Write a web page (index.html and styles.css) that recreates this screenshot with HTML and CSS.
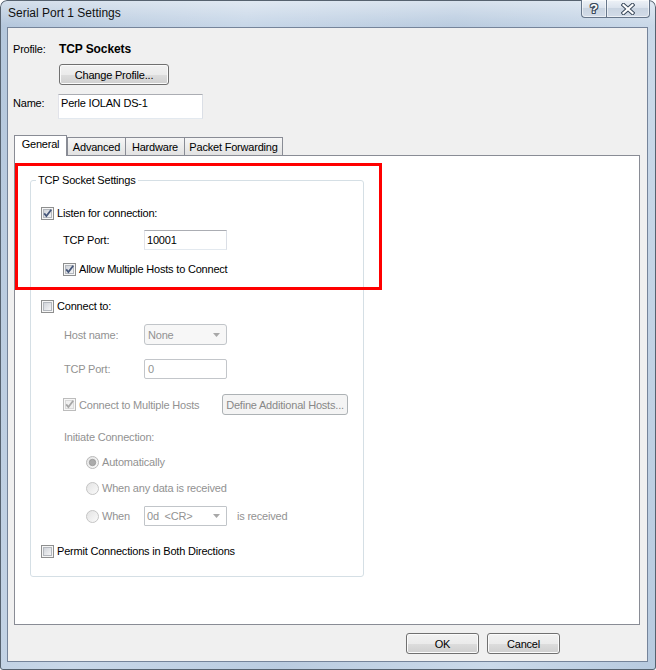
FILE: index.html
```html
<!DOCTYPE html>
<html>
<head>
<meta charset="utf-8">
<title>Serial Port 1 Settings</title>
<link rel="stylesheet" href="styles.css">
</head>
<body>
<div class="window">
  <div class="titlebar">
    <span class="title">Serial Port 1 Settings</span>
    <div class="caption-btns">
      <div class="cap help"><span class="help-glyph">?</span></div>
      <div class="cap close">
        <svg width="14" height="12" viewBox="0 0 14 12"><path d="M2.5 2 L11.5 10 M11.5 2 L2.5 10" stroke="#3b4a5c" stroke-width="4.2" stroke-linecap="square" fill="none"/><path d="M2.5 2 L11.5 10 M11.5 2 L2.5 10" stroke="#fff" stroke-width="2.2" stroke-linecap="square" fill="none"/></svg>
      </div>
    </div>
  </div>
  <div class="client">
    <div class="profile-row"><span class="profile-lbl">Profile:</span><span class="profile-name">TCP Sockets</span></div>
    <button class="btn change-btn">Change Profile...</button>
    <div class="name-row"><span class="name-lbl">Name:</span><div class="input name-box">Perle IOLAN DS-1</div></div>
    <div class="tabs">
      <div class="tab active tab-general">General</div>
      <div class="tab tab-advanced">Advanced</div>
      <div class="tab tab-hardware">Hardware</div>
      <div class="tab tab-packet">Packet Forwarding</div>
    </div>
    <div class="panel">
      <div class="highlight"></div>
      <fieldset class="group">
        <legend>TCP Socket Settings</legend>
        <div class="row row-check gap-first">
          <svg class="cb" viewBox="0 0 13 13"><rect x="0.5" y="0.5" width="12" height="12" fill="#f6f6f6" stroke="#8e8f8f"/><rect x="2.5" y="2.5" width="8" height="8" fill="url(#cbfill)" stroke="#b4b8be"/><path d="M3.2 6.4 L5.4 9 L10.2 2.8" fill="none" stroke="#46577a" stroke-width="1.8"/></svg>
          <span class="cb-label">Listen for connection:</span>
        </div>
        <div class="row row-field indent gap-10">
          <span class="field-label">TCP Port:</span>
          <div class="input">10001</div>
        </div>
        <div class="row row-check indent gap-12">
          <svg class="cb" viewBox="0 0 13 13"><rect x="0.5" y="0.5" width="12" height="12" fill="#f6f6f6" stroke="#8e8f8f"/><rect x="2.5" y="2.5" width="8" height="8" fill="url(#cbfill)" stroke="#b4b8be"/><path d="M3.2 6.4 L5.4 9 L10.2 2.8" fill="none" stroke="#46577a" stroke-width="1.8"/></svg>
          <span class="cb-label">Allow Multiple Hosts to Connect</span>
        </div>
        <div class="row row-check gap-23">
          <svg class="cb" viewBox="0 0 13 13"><rect x="0.5" y="0.5" width="12" height="12" fill="#f6f6f6" stroke="#8e8f8f"/><rect x="2.5" y="2.5" width="8" height="8" fill="url(#cbfill)" stroke="#b4b8be"/></svg>
          <span class="cb-label">Connect to:</span>
        </div>
        <div class="row row-tall indent-lbl gap-11 disabled">
          <span class="field-label narrow">Host name:</span>
          <div class="combo rounded"><span>None</span><svg width="7" height="4" viewBox="0 0 7 4"><path d="M0 0h7L3.5 4z" fill="#a8a8a8"/></svg></div>
        </div>
        <div class="row row-field indent-lbl gap-14 disabled">
          <span class="field-label narrow">TCP Port:</span>
          <div class="input input-disabled">0</div>
        </div>
        <div class="row row-tall indent gap-15 disabled">
          <svg class="cb" viewBox="0 0 13 13"><rect x="0.5" y="0.5" width="12" height="12" fill="#f7f7f7" stroke="#bcbcbc"/><rect x="2.5" y="2.5" width="8" height="8" fill="#f0f0f0" stroke="#d9d9d9"/><path d="M3.2 6.4 L5.4 9 L10.2 2.8" fill="none" stroke="#a6a6a6" stroke-width="1.8"/></svg>
          <span class="cb-label">Connect to Multiple Hosts</span>
          <button class="btn btn-disabled define-btn">Define Additional Hosts...</button>
        </div>
        <div class="row row-check indent-lbl gap-15 disabled">
          <span>Initiate Connection:</span>
        </div>
        <div class="row row-check indent-radio gap-11 disabled">
          <svg class="rb" viewBox="0 0 13 13"><circle cx="6.5" cy="6.5" r="6" fill="url(#rbfill)" stroke="#b9b9b9"/><circle cx="6.5" cy="6.5" r="3.2" fill="#ababab" stroke="#969696" stroke-width="0.8"/></svg>
          <span class="cb-label">Automatically</span>
        </div>
        <div class="row row-check indent-radio gap-12 disabled">
          <svg class="rb" viewBox="0 0 13 13"><circle cx="6.5" cy="6.5" r="6" fill="url(#rbfill)" stroke="#c4c4c4"/></svg>
          <span class="cb-label">When any data is received</span>
        </div>
        <div class="row row-field indent-radio gap-11 disabled">
          <svg class="rb" viewBox="0 0 13 13"><circle cx="6.5" cy="6.5" r="6" fill="url(#rbfill)" stroke="#c4c4c4"/></svg>
          <span class="cb-label when-label">When</span>
          <div class="combo char-combo"><span class="pre">0d  &lt;CR&gt;</span><svg width="7" height="4" viewBox="0 0 7 4"><path d="M0 0h7L3.5 4z" fill="#a8a8a8"/></svg></div>
          <span class="received">is received</span>
        </div>
        <div class="row row-check gap-18">
          <svg class="cb" viewBox="0 0 13 13"><rect x="0.5" y="0.5" width="12" height="12" fill="#f6f6f6" stroke="#8e8f8f"/><rect x="2.5" y="2.5" width="8" height="8" fill="url(#cbfill)" stroke="#b4b8be"/></svg>
          <span class="cb-label">Permit Connections in Both Directions</span>
        </div>
      </fieldset>
    </div>
    <div class="dialog-btns">
      <button class="btn dlg-btn">OK</button>
      <button class="btn dlg-btn">Cancel</button>
    </div>
  </div>
</div>
<svg class="defs" width="0" height="0">
  <defs>
    <linearGradient id="cbfill" x1="0" y1="0" x2="1" y2="1">
      <stop offset="0" stop-color="#cdd1d7"/>
      <stop offset="1" stop-color="#f7f7f8"/>
    </linearGradient>
    <linearGradient id="rbfill" x1="0" y1="0" x2="1" y2="1">
      <stop offset="0" stop-color="#e2e2e2"/>
      <stop offset="1" stop-color="#fbfbfb"/>
    </linearGradient>
  </defs>
</svg>
</body>
</html>
```
FILE: styles.css
```css
body {
  margin: 0;
  background: #fff;
  font-family: "Liberation Sans", Arial, sans-serif;
  font-size: 11px;
  letter-spacing: -0.2px;
  color: #000;
}

.defs {
  display: block;
  width: 0;
  height: 0;
  overflow: hidden;
}

.window {
  width: 656px;
  height: 670px;
  box-sizing: border-box;
  padding: 0 8px 8px 7px;
  display: flex;
  flex-direction: column;
  border-radius: 7px 7px 3px 3px;
  overflow: hidden;
  background:
    linear-gradient(180deg, rgba(255,255,255,0.45) 0, rgba(255,255,255,0) 26px),
    linear-gradient(105deg, #b4c7dc 0%, #c8d7e8 30%, #bacce0 55%, #cad9e9 80%, #b7cadf 100%);
  box-shadow: inset 0 0 0 1px #56626f;
}

.titlebar {
  height: 27px;
  flex: none;
  display: flex;
  align-items: flex-start;
}

.title {
  margin: 6px 0 0 1px;
  font-size: 12px;
  line-height: 14px;
  letter-spacing: 0;
  color: #111;
}

.caption-btns {
  margin-left: auto;
  margin-right: -2px;
  display: flex;
}

.cap {
  height: 18px;
  box-sizing: border-box;
  border: 1px solid #66768a;
  border-top: none;
  background: linear-gradient(180deg, #eef2f7 0%, #dbe3ed 45%, #c9d4e1 50%, #d3dce8 100%);
  box-shadow: inset 0 0 0 1px rgba(255,255,255,0.55);
  display: flex;
  align-items: center;
  justify-content: center;
}

.help {
  width: 25px;
  border-right: none;
  border-radius: 0 0 0 4px;
}

.close {
  width: 44px;
  border-radius: 0 0 4px 0;
}

.help-glyph {
  font-family: "Liberation Sans", Arial, sans-serif;
  font-weight: bold;
  font-size: 13px;
  line-height: 13px;
  letter-spacing: 0;
  color: #fff;
  text-shadow: 1px 0 0 #3b4a5c, -1px 0 0 #3b4a5c, 0 1px 0 #3b4a5c, 0 -1px 0 #3b4a5c,
    1px 1px 0 #3b4a5c, -1px -1px 0 #3b4a5c, 1px -1px 0 #3b4a5c, -1px 1px 0 #3b4a5c;
}

.client {
  flex: 1;
  min-height: 0;
  border: 1px solid #75849a;
  background: #f0f0f0;
  display: flex;
  flex-direction: column;
}

.profile-row {
  margin: 14px 0 0 5px;
  height: 14px;
  display: flex;
  align-items: center;
}

.profile-lbl {
  width: 46px;
}

.profile-name {
  font-weight: bold;
  font-size: 12px;
  letter-spacing: -0.1px;
}

.btn {
  box-sizing: border-box;
  border: 1px solid #707070;
  border-radius: 3px;
  background: linear-gradient(180deg, #f2f2f2 0%, #ebebeb 50%, #dddddd 51%, #cfcfcf 100%);
  box-shadow: inset 0 0 0 1px #fbfbfb;
  font: inherit;
  letter-spacing: inherit;
  color: #000;
  padding: 0;
  display: flex;
  align-items: center;
  justify-content: center;
  line-height: 14px;
}

.change-btn {
  margin: 8px 0 0 51px;
  width: 110px;
  height: 21px;
}

.name-row {
  margin: 9px 0 0 5px;
  display: flex;
  align-items: flex-start;
}

.name-lbl {
  width: 45px;
  padding-top: 2px;
  line-height: 14px;
}

.input {
  box-sizing: border-box;
  width: 83px;
  height: 20px;
  border: 1px solid;
  border-color: #abadb3 #dbdfe6 #e3e9ef #e2e3ea;
  background: #fff;
  padding-left: 2px;
  line-height: 18px;
}

.name-box {
  width: 145px;
  height: 25px;
  padding-top: 1px;
  line-height: 14px;
}

.tabs {
  display: flex;
  align-items: flex-end;
  height: 20px;
  margin: 16px 0 0 6px;
  position: relative;
  z-index: 1;
}

.tab {
  box-sizing: border-box;
  height: 18px;
  border: 1px solid #898c95;
  border-bottom: none;
  background: linear-gradient(180deg, #f6f6f6 0%, #ececec 50%, #e2e2e2 100%);
  text-align: center;
  line-height: 14px;
  padding-top: 2px;
}

.tab.active {
  height: 21px;
  margin-bottom: -1px;
  background: #fff;
  padding-top: 1px;
}

.tab-general { width: 53px; }
.tab-advanced { width: 59px; }
.tab-hardware { width: 60px; margin-left: -1px; }
.tab-packet { width: 99px; margin-left: -1px; }

.panel {
  box-sizing: border-box;
  width: 626px;
  height: 470px;
  margin-left: 6px;
  border: 1px solid #898c95;
  background: #fff;
  position: relative;
}

.highlight {
  position: absolute;
  left: 0;
  top: 7px;
  width: 367px;
  height: 127px;
  box-sizing: border-box;
  border: 3px solid #f00;
  z-index: 2;
}

.group {
  box-sizing: border-box;
  width: 334px;
  min-width: 0;
  margin: 17px 0 0 15px;
  padding: 0 15px 18px 10px;
  border: 1px solid #d5dfe5;
  border-radius: 3px;
}

.group legend {
  padding: 0 2px;
  margin-left: -5px;
  line-height: 14px;
}

.row {
  display: flex;
  align-items: center;
}

.row-check { height: 14px; }
.row-field { height: 20px; }
.row-tall { height: 21px; }

.indent { padding-left: 22px; }
.indent-lbl { padding-left: 23px; }
.indent-radio { padding-left: 45px; }

.gap-first { margin-top: 19px; }
.gap-10 { margin-top: 10px; }
.gap-11 { margin-top: 11px; }
.gap-12 { margin-top: 12px; }
.gap-14 { margin-top: 14px; }
.gap-15 { margin-top: 15px; }
.gap-18 { margin-top: 18px; }
.gap-23 { margin-top: 23px; }

.cb, .rb {
  flex: none;
  width: 13px;
  height: 13px;
}

.cb-label {
  margin-left: 3px;
  line-height: 14px;
}

.field-label {
  width: 81px;
  flex: none;
}

.field-label.narrow {
  width: 80px;
}

.disabled {
  color: #929292;
}

.input-disabled {
  border-color: #c3c6ca;
  border-radius: 2px;
  padding-left: 3px;
}

.combo {
  box-sizing: border-box;
  width: 83px;
  height: 100%;
  border: 1px solid #c1c5c9;
  background: #f7f7f7;
  display: flex;
  align-items: center;
  justify-content: space-between;
  padding: 0 6px 0 3px;
  color: #929292;
}

.combo.rounded {
  border-radius: 3px;
}

.char-combo {
  background: #fff;
  padding-left: 2px;
  border-radius: 1px;
}

.pre {
  white-space: pre;
}

.when-label {
  width: 42px;
  flex: none;
}

.received {
  margin-left: 10px;
}

.btn-disabled {
  border-color: #adb2b5;
  background: #f4f4f4;
  box-shadow: none;
  color: #888;
}

.define-btn {
  margin-left: auto;
  width: 126px;
  height: 21px;
}

.dialog-btns {
  display: flex;
  justify-content: flex-end;
  gap: 8px;
  margin-top: 8px;
  padding-right: 87px;
}

.dlg-btn {
  width: 73px;
  height: 21px;
}
```
